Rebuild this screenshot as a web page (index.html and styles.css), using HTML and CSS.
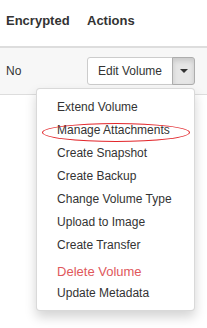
FILE: index.html
```html
<!DOCTYPE html>
<html lang="en">
<head>
  <meta charset="UTF-8">
  <title>Volumes - Actions</title>
  <link rel="stylesheet" href="styles.css">
</head>
<body>
  <table class="volumes">
    <colgroup><col class="col-enc"><col></colgroup>
    <thead>
      <tr><th>Encrypted</th><th>Actions</th></tr>
    </thead>
    <tbody>
      <tr>
        <td>No</td>
        <td>
          <div class="btn-group">
            <button class="btn">Edit Volume</button>
            <button class="btn caret-btn"><span class="caret"></span></button>
            <ul class="menu">
              <li>Extend Volume</li>
              <li class="marked">Manage Attachments<span class="ring"></span></li>
              <li>Create Snapshot</li>
              <li>Create Backup</li>
              <li>Change Volume Type</li>
              <li>Upload to Image</li>
              <li>Create Transfer</li>
              <li class="danger">Delete Volume</li>
              <li>Update Metadata</li>
            </ul>
          </div>
        </td>
      </tr>
    </tbody>
  </table>
</body>
</html>
```

FILE: styles.css
```css
html {
  height: 100%;
}
body {
  margin: 0;
  min-height: 100%;
  font-family: 'Liberation Sans', Arial, sans-serif;
  font-size: 12px;
  color: #333;
  background: #fff;
}
.volumes {
  width: 100%;
  border-collapse: collapse;
  table-layout: fixed;
}
.col-enc {
  width: 81px;
}
th {
  text-align: left;
  font-size: 13px;
  font-weight: bold;
  line-height: 18px;
  padding: 12px 6px 16px;
  border-bottom: 2px solid #ddd;
}
td {
  padding: 9px 6px;
  line-height: 17px;
  background: #f7f7f7;
  border-bottom: 1px solid #ddd;
  vertical-align: middle;
}
.btn-group {
  position: relative;
  display: inline-flex;
  vertical-align: middle;
}
.btn {
  font-family: inherit;
  font-size: 12px;
  color: #333;
  background: #fff;
  border: 1px solid #ccc;
  height: 28px;
  padding: 0 10px;
  margin: 0;
  border-radius: 3px 0 0 3px;
}
.caret-btn {
  width: 23px;
  padding: 0;
  margin-left: -1px;
  background: #e6e6e6;
  border-color: #adadad;
  border-radius: 0 3px 3px 0;
  box-shadow: inset 0 3px 5px rgba(0, 0, 0, .125);
  display: flex;
  align-items: center;
  justify-content: center;
}
.caret {
  width: 0;
  height: 0;
  border-top: 4px solid #333;
  border-left: 4px solid transparent;
  border-right: 4px solid transparent;
}
.menu {
  position: absolute;
  z-index: 10;
  top: 31px;
  right: 0;
  width: 157px;
  margin: 0;
  padding: 7px 0 5px;
  list-style: none;
  background: #fff;
  border: 1px solid rgba(0, 0, 0, .15);
  border-radius: 4px;
  box-shadow: 0 6px 12px rgba(0, 0, 0, .175);
}
.menu li {
  padding: 3px 20px;
  line-height: 17px;
  white-space: nowrap;
}
.menu .danger {
  color: #e0585c;
  margin-top: 4px;
  font-size: 13px;
  line-height: 15px;
}
.marked {
  position: relative;
}
.ring {
  position: absolute;
  left: 5px;
  top: 4px;
  width: 148px;
  height: 19px;
  border: 1px solid #e2262b;
  border-radius: 50%;
  box-sizing: border-box;
}
```
